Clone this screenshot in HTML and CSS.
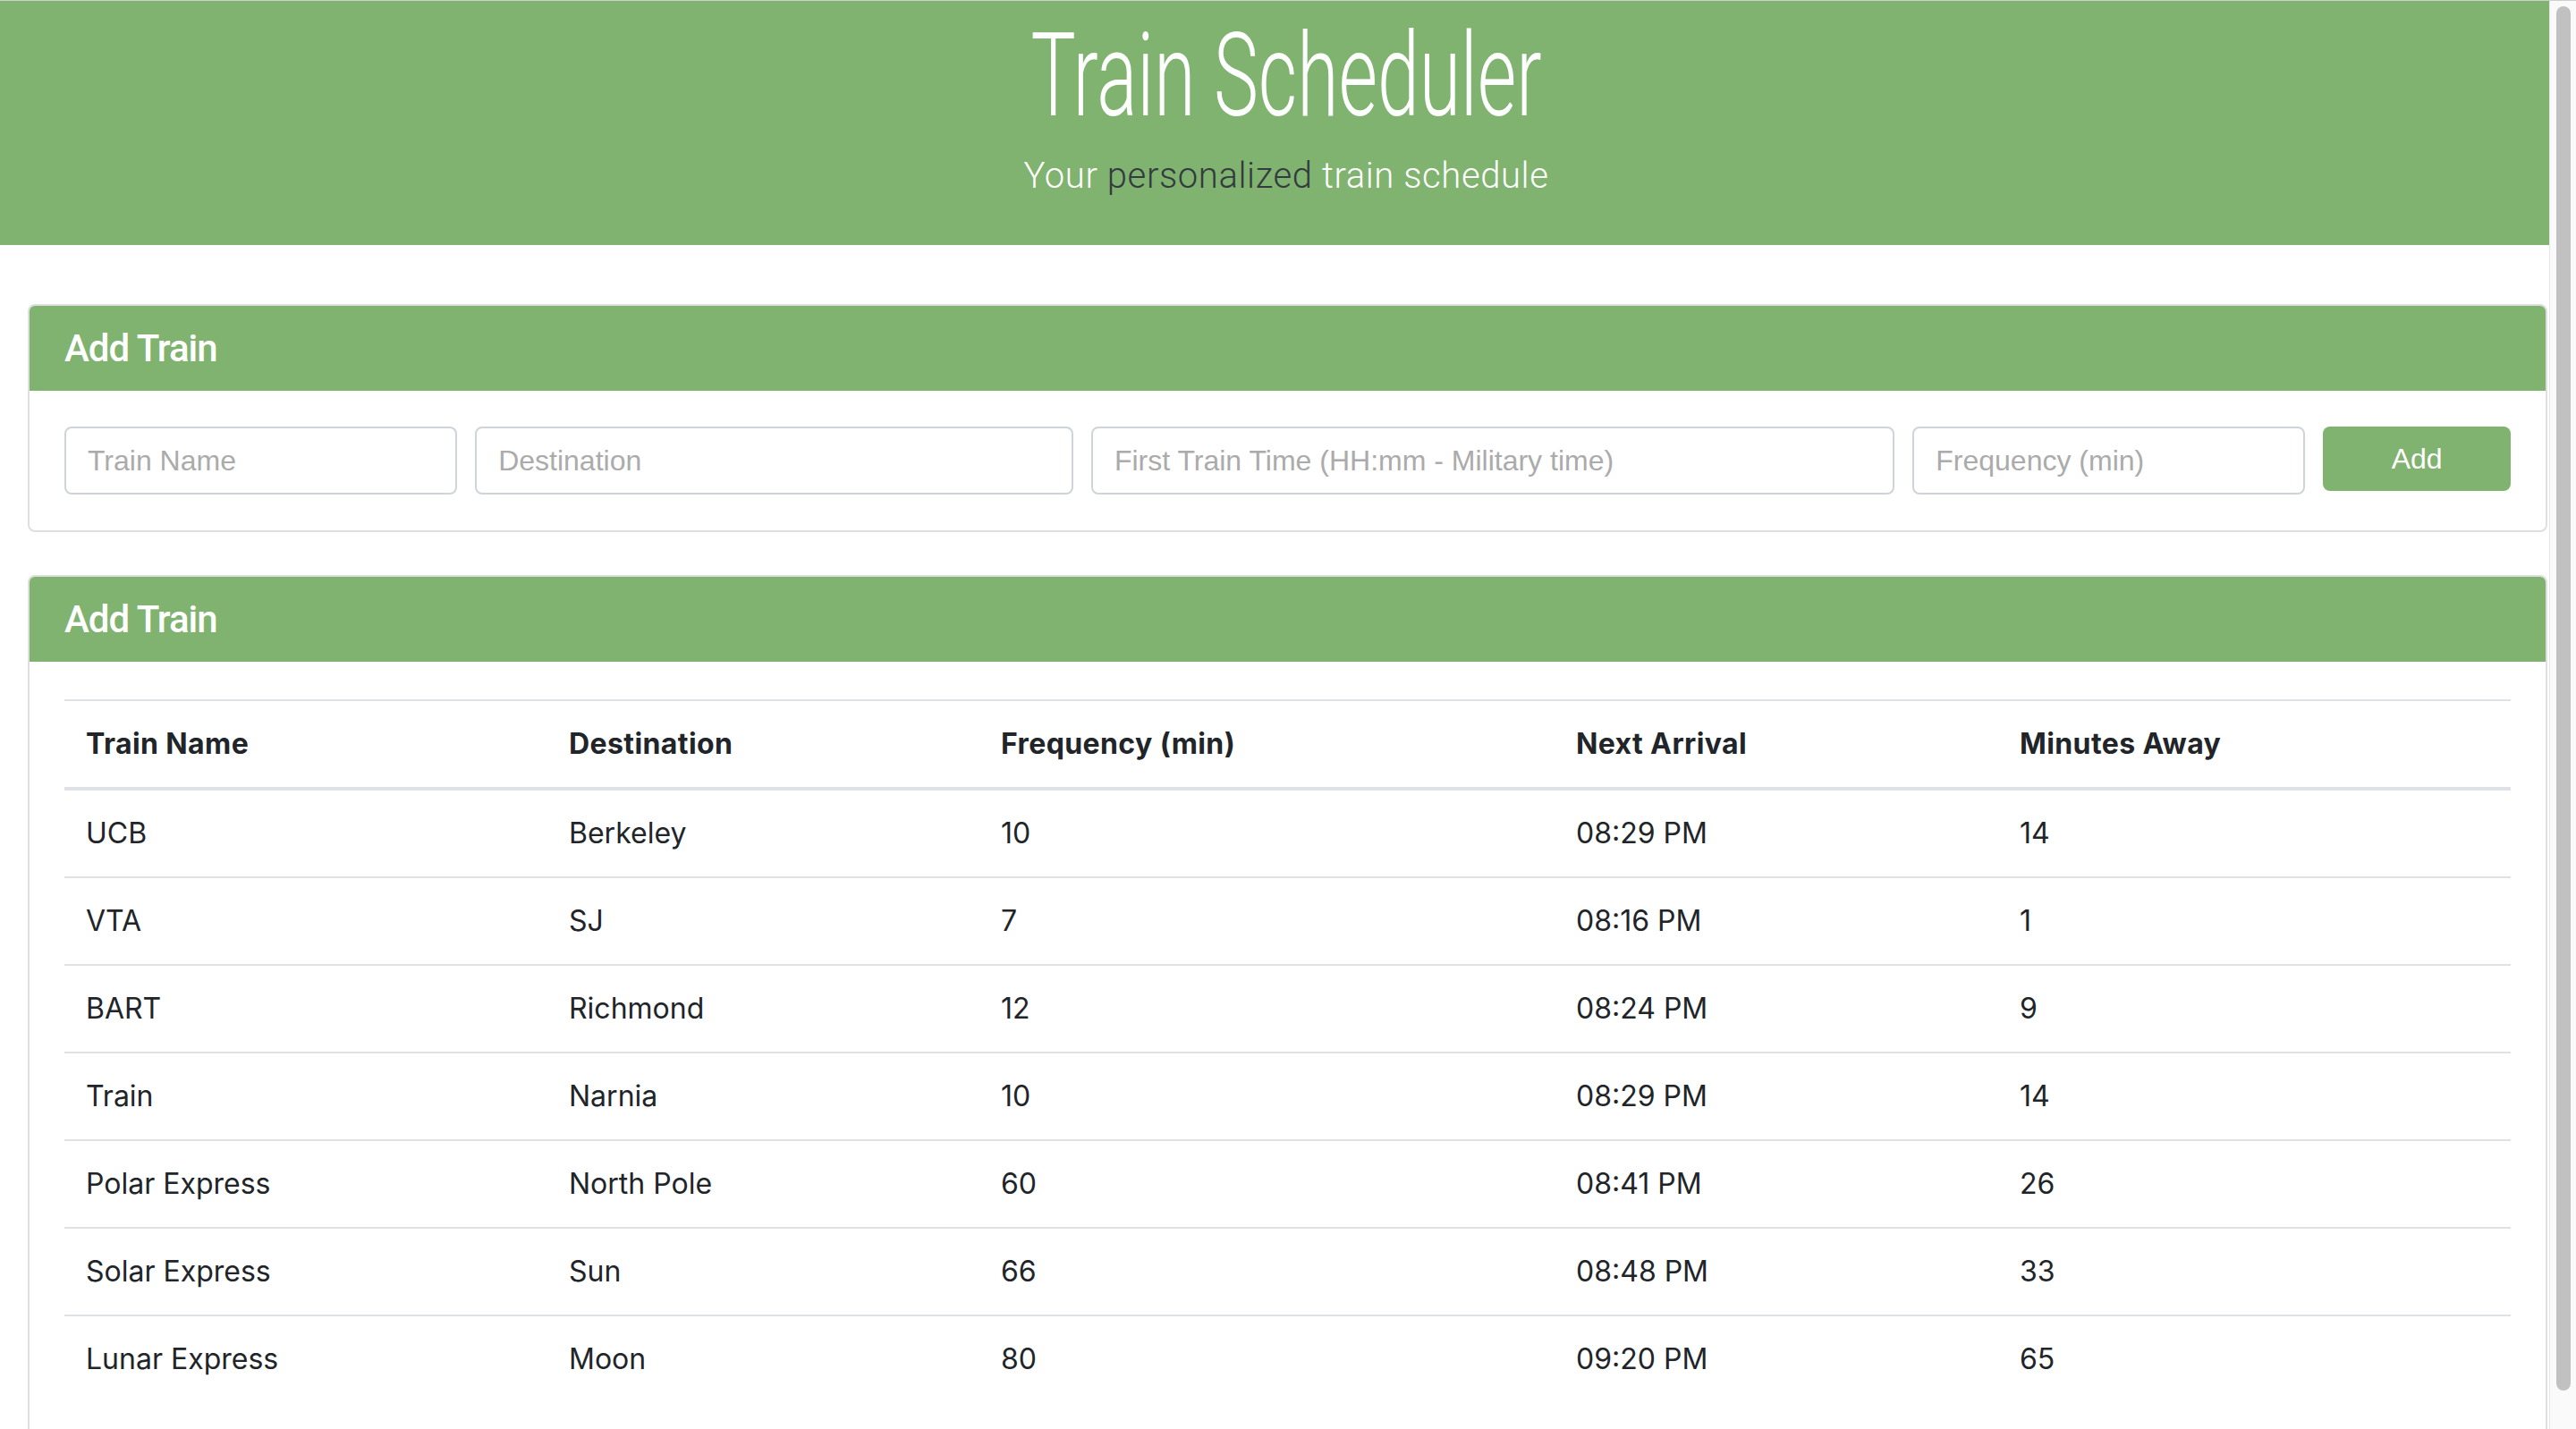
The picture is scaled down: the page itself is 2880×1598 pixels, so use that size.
FILE: index.html
```html
<!DOCTYPE html>
<html lang="en">
<head>
<meta charset="utf-8">
<title>Train Scheduler</title>
<link rel="stylesheet" href="styles.css">
</head>
<body>
<div class="screen">
  <div class="page">
    <header class="jumbo">
      <h1 class="title"><span class="title-text">Train Scheduler</span></h1>
      <p class="lead">Your <span class="accent">personalized</span> train schedule</p>
    </header>
    <main class="content">
      <section class="card">
        <div class="card-header"><h2 class="card-title">Add Train</h2></div>
        <div class="card-body">
          <form class="form-row">
            <div class="col col-2"><input class="input" type="text" placeholder="Train Name"></div>
            <div class="col col-3"><input class="input" type="text" placeholder="Destination"></div>
            <div class="col col-4"><input class="input" type="text" placeholder="First Train Time (HH:mm - Military time)"></div>
            <div class="col col-2"><input class="input" type="text" placeholder="Frequency (min)"></div>
            <div class="col col-1"><button class="btn" type="button">Add</button></div>
          </form>
        </div>
      </section>
      <section class="card">
        <div class="card-header"><h2 class="card-title">Add Train</h2></div>
        <div class="card-body card-body-table">
          <table class="table">
            <colgroup>
              <col class="c1"><col class="c2"><col class="c3"><col class="c4"><col class="c5">
            </colgroup>
            <thead>
              <tr><th>Train Name</th><th>Destination</th><th>Frequency (min)</th><th>Next Arrival</th><th>Minutes Away</th></tr>
            </thead>
            <tbody>
              <tr><td>UCB</td><td>Berkeley</td><td>10</td><td>08:29 PM</td><td>14</td></tr>
              <tr><td>VTA</td><td>SJ</td><td>7</td><td>08:16 PM</td><td>1</td></tr>
              <tr><td>BART</td><td>Richmond</td><td>12</td><td>08:24 PM</td><td>9</td></tr>
              <tr><td>Train</td><td>Narnia</td><td>10</td><td>08:29 PM</td><td>14</td></tr>
              <tr><td>Polar Express</td><td>North Pole</td><td>60</td><td>08:41 PM</td><td>26</td></tr>
              <tr><td>Solar Express</td><td>Sun</td><td>66</td><td>08:48 PM</td><td>33</td></tr>
              <tr><td>Lunar Express</td><td>Moon</td><td>80</td><td>09:20 PM</td><td>65</td></tr>
            </tbody>
          </table>
        </div>
      </section>
    </main>
  </div>
  <div class="scrollbar"><div class="thumb"></div></div>
</div>
</body>
</html>
```

FILE: styles.css
```css
html, body {
  margin: 0;
  padding: 0;
}

body {
  background: #fff;
  font-family: Inter, "Liberation Sans", sans-serif;
  color: #212529;
}

.screen {
  display: flex;
  height: 1598px;
  box-sizing: border-box;
  border-top: 1px solid #cfcfcf;
  overflow: hidden;
}

.page {
  flex: 1;
  min-width: 0;
  overflow: hidden;
}

/* ---------- header ---------- */
.jumbo {
  background: #7fb36f;
  height: 273px;
  box-sizing: border-box;
  padding: 19px 0 0 26px;
  text-align: center;
  color: #fff;
}

.title {
  margin: 0;
  font-family: Roboto, "Liberation Sans", sans-serif;
  font-weight: 300;
  font-size: 129px;
  line-height: 129px;
}

.title-text {
  display: inline-block;
  transform: scaleX(0.652);
}

.lead {
  margin: 24px 0 0;
  font-family: Roboto, "Liberation Sans", sans-serif;
  font-weight: 300;
  font-size: 40px;
  line-height: 48px;
  letter-spacing: 0.6px;
}

.accent {
  color: #343a40;
}

/* ---------- content ---------- */
.content {
  padding: 66px 2px 0 31px;
}

.card {
  border: 2px solid #dfdfdf;
  border-radius: 8px;
  background: #fff;
}

.card + .card {
  margin-top: 48px;
}

.card-header {
  background: #7fb36f;
  padding: 24px 39px;
  border-radius: 6px 6px 0 0;
}

.card-title {
  margin: 0;
  font-family: Roboto, "Liberation Sans", sans-serif;
  font-weight: 500;
  font-size: 42px;
  line-height: 47px;
  letter-spacing: -1px;
  color: #fff;
}

.card-body {
  padding: 40px 39px;
}

.card-body-table {
  padding-top: 42px;
}

/* ---------- form ---------- */
.form-row {
  display: flex;
  margin: 0 -10px;
}

.col {
  box-sizing: border-box;
  padding: 0 10px;
}

.col-1 { flex: 0 0 8.3333%; }
.col-2 { flex: 0 0 16.6667%; }
.col-3 { flex: 0 0 25%; }
.col-4 { flex: 0 0 33.3333%; }

.input {
  display: block;
  width: 100%;
  height: 76px;
  box-sizing: border-box;
  border: 2px solid #ced4da;
  border-radius: 8px;
  padding: 0 24px;
  font-family: "Liberation Sans", Arial, sans-serif;
  font-size: 32px;
  color: #495057;
  background: #fff;
  outline: none;
}

.input::placeholder {
  color: #ababab;
}

.btn {
  display: block;
  width: 100%;
  height: 72px;
  border: 0;
  border-radius: 8px;
  background: #7fb36f;
  color: #fff;
  font-family: "Liberation Sans", Arial, sans-serif;
  font-size: 32px;
  line-height: 1;
}

/* ---------- table ---------- */
.table {
  width: 100%;
  border-collapse: collapse;
  table-layout: fixed;
}

.c1 { width: 540px; }
.c2 { width: 483px; }
.c3 { width: 643px; }
.c4 { width: 496px; }
.c5 { width: 573px; }

.table th,
.table td {
  padding: 24px;
  text-align: left;
  vertical-align: top;
  border-top: 2px solid #dee2e6;
  font-size: 32px;
  line-height: 48px;
}

.table th {
  font-weight: 700;
  letter-spacing: 0.4px;
}

.table thead th {
  border-bottom: 4px solid #dee2e6;
}

/* ---------- scrollbar ---------- */
.scrollbar {
  flex: 0 0 30px;
  box-sizing: border-box;
  background: #fafafa;
  border-left: 1px solid #e6e6e6;
  padding: 6px 6px 0 7px;
}

.thumb {
  height: 1548px;
  background: #c1c1c1;
  border-radius: 8px;
}
```
